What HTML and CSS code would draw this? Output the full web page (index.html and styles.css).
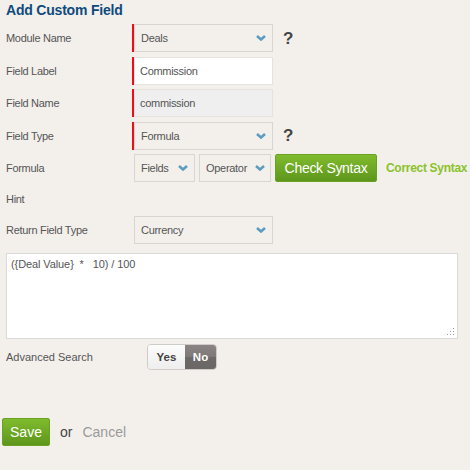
FILE: index.html
```html
<!DOCTYPE html>
<html>
<head>
<meta charset="utf-8">
<link rel="stylesheet" href="styles.css">
</head>
<body>
<div class="page">
  <h1 class="title">Add Custom Field</h1>
  <div class="form">
    <div class="row">
      <div class="label">Module Name</div>
      <div class="ctrl">
        <div class="select req w139"><span>Deals</span><svg class="chev" viewBox="0 0 10 6"><path d="M1 1 L5 4.5 L9 1" /></svg></div>
        <span class="help">?</span>
      </div>
    </div>
    <div class="row">
      <div class="label">Field Label</div>
      <div class="ctrl"><div class="input req white w139">Commission</div></div>
    </div>
    <div class="row">
      <div class="label">Field Name</div>
      <div class="ctrl"><div class="input req grey w139">commission</div></div>
    </div>
    <div class="row">
      <div class="label">Field Type</div>
      <div class="ctrl">
        <div class="select req w139"><span>Formula</span><svg class="chev" viewBox="0 0 10 6"><path d="M1 1 L5 4.5 L9 1" /></svg></div>
        <span class="help">?</span>
      </div>
    </div>
    <div class="row">
      <div class="label">Formula</div>
      <div class="ctrl">
        <div class="select w61"><span>Fields</span><svg class="chev" viewBox="0 0 10 6"><path d="M1 1 L5 4.5 L9 1" /></svg></div>
        <div class="select w72 sm"><span>Operator</span><svg class="chev" viewBox="0 0 10 6"><path d="M1 1 L5 4.5 L9 1" /></svg></div>
        <button class="btn check">Check Syntax</button>
        <span class="ok">Correct Syntax</span>
      </div>
    </div>
    <div class="row hint">
      <div class="label">Hint</div>
    </div>
    <div class="row">
      <div class="label">Return Field Type</div>
      <div class="ctrl">
        <div class="select w139"><span>Currency</span><svg class="chev" viewBox="0 0 10 6"><path d="M1 1 L5 4.5 L9 1" /></svg></div>
      </div>
    </div>
    <div class="textarea">({Deal Value}  *   10) / 100<svg class="grip" viewBox="0 0 8 8"><rect x="6" y="0" width="1" height="1"/><rect x="3" y="3" width="1" height="1"/><rect x="6" y="3" width="1" height="1"/><rect x="0" y="6" width="1" height="1"/><rect x="3" y="6" width="1" height="1"/><rect x="6" y="6" width="1" height="1"/></svg></div>
    <div class="row adv">
      <div class="label">Advanced Search</div>
      <div class="toggle"><span class="yes">Yes</span><span class="no">No</span></div>
    </div>
  </div>
  <div class="actions">
    <button class="btn save">Save</button>
    <span class="or">or</span>
    <span class="cancel">Cancel</span>
  </div>
</div>
</body>
</html>
```

FILE: styles.css
```css
html, body {
  margin: 0;
  padding: 0;
  background: #f3f0ec;
}
body {
  font-family: "Liberation Sans", Arial, sans-serif;
  color: #555;
}
.page {
  padding: 0 0 0 6px;
}
.title {
  margin: 0;
  font-size: 14px;
  line-height: 20px;
  font-weight: bold;
  color: #0f4a7c;
  letter-spacing: -0.2px;
}
.form {
  margin-top: 4px;
  display: flex;
  flex-direction: column;
  gap: 4.5px;
}
.row {
  display: flex;
  align-items: center;
  height: 28px;
}
.row.hint {
  height: 25px;
}
.label {
  width: 128px;
  font-size: 11px;
  letter-spacing: -0.3px;
  color: #555;
}
.ctrl {
  display: flex;
  align-items: center;
}
.select, .input {
  box-sizing: border-box;
  height: 28px;
  border: 1px solid #d9d6d2;
  background: #f3f0ec;
  display: flex;
  align-items: center;
  justify-content: space-between;
  padding: 0 6px 0 6px;
  font-size: 11px;
  letter-spacing: -0.3px;
  color: #555;
}
.req {
  box-shadow: -2px 0 0 #e8101a;
}
.input {
  padding-left: 5px;
}
.input.white {
  background: #fff;
  border-color: #e6e3df;
}
.input.grey {
  background: #efefef;
  border-color: #e6e3df;
}
.w139 { width: 139px; }
.w61 { width: 61px; margin-right: 4px; }
.w72 { width: 72px; padding-right: 5px; }
.chev {
  width: 10px;
  height: 6px;
  fill: none;
  stroke: #5b9cc0;
  stroke-width: 2.6;
  stroke-linecap: butt;
  stroke-linejoin: miter;
}
.help {
  margin-left: 10px;
  font-size: 17px;
  font-weight: bold;
  color: #444;
  line-height: 1;
}
.btn {
  font-family: "Liberation Sans", Arial, sans-serif;
  color: #fff;
  border: 1px solid #6aa122;
  border-radius: 2px;
  background: linear-gradient(#7fbb2d, #5e961c);
  cursor: pointer;
  padding: 0;
}
.check {
  margin-left: 4px;
  width: 102px;
  height: 28px;
  font-size: 14px;
  letter-spacing: -0.3px;
}
.ok {
  margin-left: 9px;
  font-size: 12px;
  font-weight: bold;
  letter-spacing: -0.3px;
  color: #8cc22a;
}
.textarea {
  position: relative;
  box-sizing: border-box;
  margin-top: 4.5px;
  width: 452px;
  height: 86px;
  background: #fff;
  border: 1px solid #dcdad6;
  padding: 4px 4px;
  font-size: 11px;
  color: #555;
  white-space: pre;
  letter-spacing: -0.1px;
}
.grip {
  position: absolute;
  right: 2px;
  bottom: 2px;
  width: 8px;
  height: 8px;
  fill: #9a9a9a;
}
.row.adv {
  height: 26px;
}
.adv .label {
  width: 141px;
  letter-spacing: 0;
}
.toggle {
  display: flex;
  height: 26px;
  box-sizing: border-box;
  border-radius: 4px;
  overflow: hidden;
  border: 1px solid #cfcbc7;
  font-size: 11.5px;
  font-weight: bold;
}
.yes {
  width: 37px;
  display: flex;
  align-items: center;
  justify-content: center;
  background: linear-gradient(#fcfcfc, #eeeeee);
  color: #444;
}
.no {
  width: 31px;
  display: flex;
  align-items: center;
  justify-content: center;
  background: linear-gradient(#8a8584 0%, #7e7978 50%, #6c6968 51%, #6a6766 100%);
  color: #fff;
}
.actions {
  margin-top: 48px;
  margin-left: -4px;
  display: flex;
  align-items: center;
}
.save {
  width: 48px;
  height: 28px;
  font-size: 14px;
}
.or {
  margin-left: 10px;
  font-size: 14px;
  color: #444;
}
.cancel {
  margin-left: 10px;
  font-size: 14px;
  color: #9a9a9a;
}
```
